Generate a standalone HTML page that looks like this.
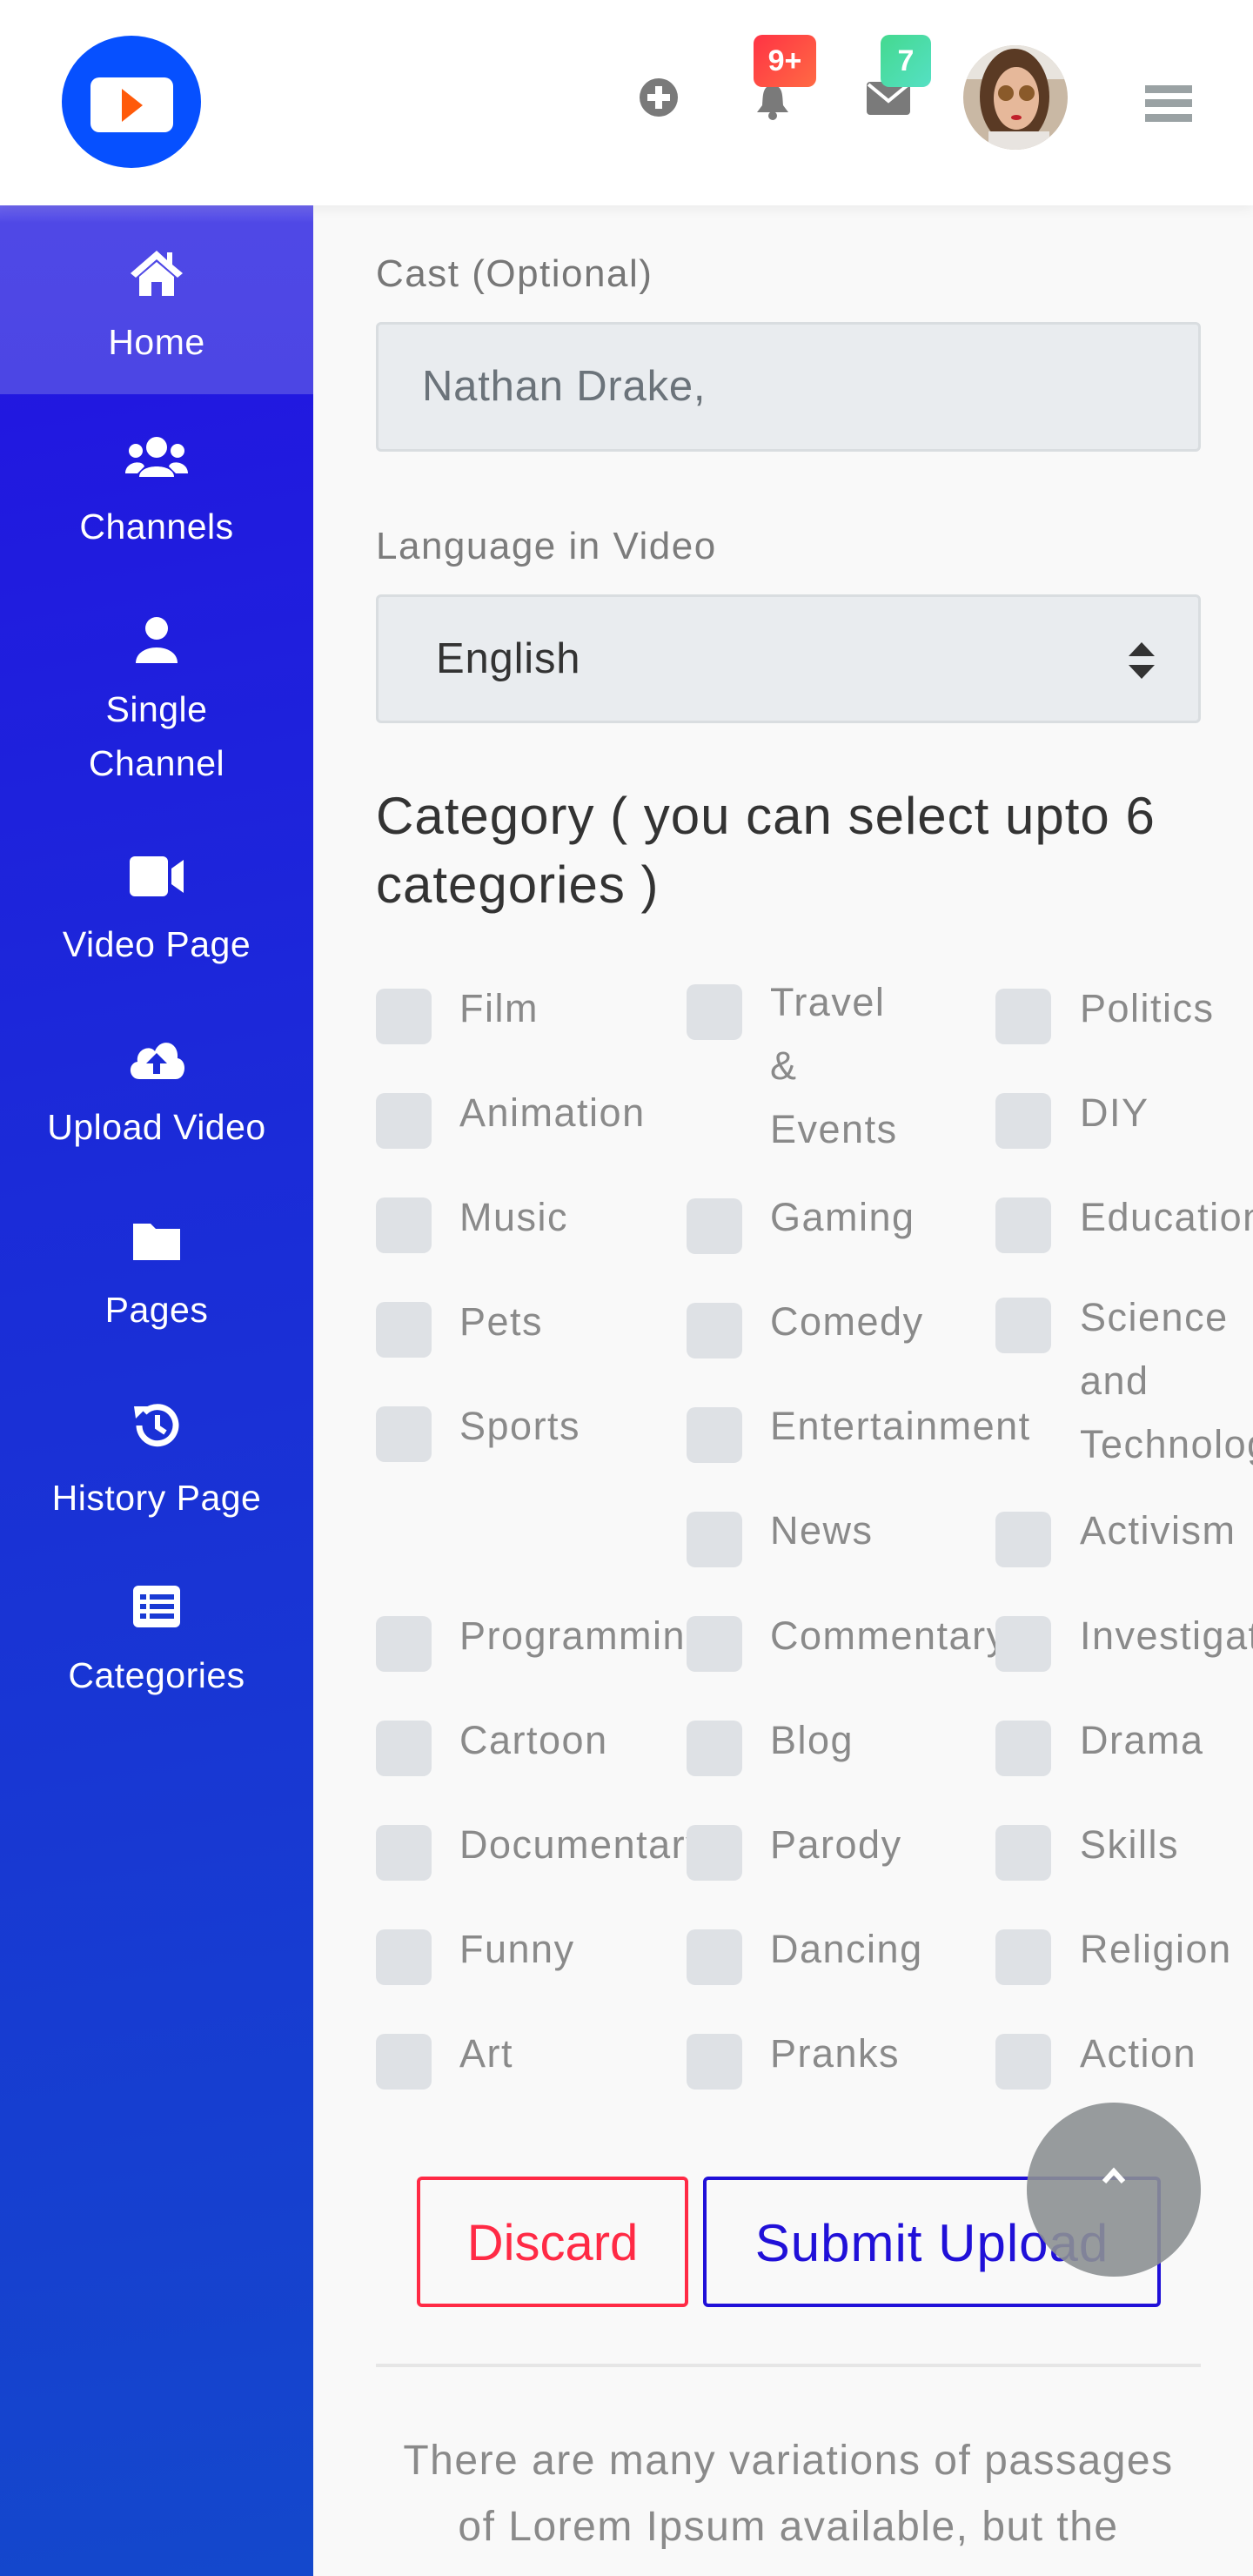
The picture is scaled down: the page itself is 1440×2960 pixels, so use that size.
<!DOCTYPE html>
<html><head><meta charset="utf-8"><style>
*{margin:0;padding:0;box-sizing:border-box}
html,body{width:1440px;height:2960px;overflow:hidden}
body{background:#f9f9f9;font-family:"Liberation Sans",sans-serif;position:relative}
#wrap{position:absolute;left:0;top:0;width:1440px;height:2960px;overflow:hidden}
.hdr{position:absolute;left:0;top:0;width:1440px;height:236px;background:#fff;box-shadow:0 4px 14px rgba(0,0,0,.06);z-index:5}
.side{position:absolute;left:0;top:236px;width:360px;height:2724px;background:linear-gradient(170deg,#2313e2 0%,#1b2bd8 40%,#1448cc 100%)}
.act{position:absolute;left:0;top:0;width:360px;height:217px;background:linear-gradient(180deg,#6e66ee 0,#4f48e6 20px,#4c46e4 100%)}
.si{position:absolute;left:0;width:360px;text-align:center;color:#fff;font-size:41px;line-height:62px;letter-spacing:0.5px}
.si svg{display:block;margin:0 auto 22px}
.abs{position:absolute}
.lbl{position:absolute;left:432px;color:#7c7c7c;font-size:44px;letter-spacing:1.5px}
.inp{position:absolute;left:432px;width:948px;background:#e9ecef;border:3px solid #d9dde0;border-radius:6px;color:#6b737a;font-size:49px;letter-spacing:0.8px}
.cb{position:absolute;width:64px;height:64px;background:#dee1e5;border-radius:10px}
.ct{position:absolute;color:#8a8a8a;font-size:45px;line-height:73px;white-space:nowrap;letter-spacing:1.5px}
.c3{max-width:199px;overflow:hidden}
</style></head><body><div id="wrap">
<div class="hdr">
  <svg class="abs" style="left:70px;top:40px" width="162" height="155"><ellipse cx="81" cy="77" rx="80" ry="76" fill="#0650ff"/><rect x="34" y="49" width="95" height="63" rx="10" fill="#fff"/><path d="M70 62 L94 81 L70 100Z" fill="#ff5a0a"/></svg>
  <svg class="abs" style="left:734px;top:89px" width="46" height="46"><circle cx="23" cy="23" r="22" fill="#7a7a7a"/><rect x="19" y="10" width="8" height="26" fill="#fff"/><rect x="10" y="19" width="26" height="8" fill="#fff"/></svg>
  <svg class="abs" style="left:866px;top:95px" width="44" height="44"><path d="M22 2 C10 4 11 14 10 26 L4 34 H40 L34 26 C33 14 34 4 22 2Z" fill="#7a7a7a"/><circle cx="22" cy="38" r="5" fill="#7a7a7a"/></svg>
  <div class="abs" style="left:866px;top:40px;width:72px;height:60px;border-radius:10px;background:linear-gradient(135deg,#ff3344,#ff6a44);color:#fff;font-size:34px;font-weight:bold;text-align:center;line-height:60px">9+</div>
  <svg class="abs" style="left:996px;top:94px" width="50" height="38"><rect width="50" height="38" rx="4" fill="#7a7a7a"/><path d="M2 3 L25 22 L48 3" stroke="#fff" stroke-width="4" fill="none"/></svg>
  <div class="abs" style="left:1012px;top:40px;width:58px;height:60px;border-radius:10px;background:linear-gradient(135deg,#44d98f,#55e0c4);color:#fff;font-size:34px;font-weight:bold;text-align:center;line-height:60px">7</div>
  <svg class="abs" style="left:1106px;top:51px" width="122" height="122"><defs><clipPath id="c"><circle cx="61" cy="61" r="60"/></clipPath></defs><g clip-path="url(#c)"><rect width="122" height="122" fill="#c9b8a4"/><rect x="0" y="0" width="122" height="40" fill="#e8e4de"/><ellipse cx="60" cy="60" rx="40" ry="55" fill="#5a3a24"/><ellipse cx="62" cy="62" rx="26" ry="36" fill="#e6b89a"/><circle cx="50" cy="56" r="9" fill="#8a5a2a"/><circle cx="74" cy="56" r="9" fill="#8a5a2a"/><ellipse cx="62" cy="84" rx="6" ry="3" fill="#c0202a"/><rect x="30" y="100" width="70" height="30" fill="#e8e4e0"/></g></svg>
  <div class="abs" style="left:1316px;top:98px;width:54px;height:9px;background:#9aa2a4"></div>
  <div class="abs" style="left:1316px;top:114px;width:54px;height:9px;background:#9aa2a4"></div>
  <div class="abs" style="left:1316px;top:131px;width:54px;height:9px;background:#9aa2a4"></div>
</div>
<div class="side">
  <div class="act"></div>
  <div class="si" style="top:50px"><svg width="64" height="54" viewBox="0 0 64 54"><path d="M32 2 L2 28 L8 33 L32 12 L56 33 L62 28 L50 18 V4 H44 V13Z" fill="#fff"/><path d="M12 32 L32 15 L52 32 V54 H38 V38 H26 V54 H12Z" fill="#fff"/></svg>Home</div>
  <div class="si" style="top:262px"><svg width="76" height="54" viewBox="0 0 76 54"><circle cx="38" cy="16" r="12" fill="#fff"/><circle cx="14" cy="20" r="8" fill="#fff"/><circle cx="62" cy="20" r="8" fill="#fff"/><path d="M18 50 C18 34 58 34 58 50Z" fill="#fff"/><path d="M2 46 C2 32 22 30 24 38 L16 46Z M74 46 C74 32 54 30 52 38 L60 46Z" fill="#fff"/></svg>Channels</div>
  <div class="si" style="top:472px"><svg width="56" height="54" viewBox="0 0 56 54"><circle cx="28" cy="14" r="13" fill="#fff"/><path d="M4 54 C4 30 52 30 52 54Z" fill="#fff"/></svg>Single<br>Channel</div>
  <div class="si" style="top:746px"><svg width="66" height="50" viewBox="0 0 66 50"><rect x="2" y="2" width="44" height="46" rx="6" fill="#fff"/><path d="M50 16 L64 6 V44 L50 34Z" fill="#fff"/></svg>Video Page</div>
  <div class="si" style="top:952px"><svg width="72" height="54" viewBox="0 0 72 54"><path d="M16 52 C4 52 2 34 14 32 C12 18 28 12 34 20 C40 4 62 8 60 28 C72 30 70 52 58 52Z" fill="#fff"/><path d="M36 22 L24 34 H32 V46 H40 V34 H48Z" fill="#1b2bd8"/></svg>Upload Video</div>
  <div class="si" style="top:1166px"><svg width="62" height="50" viewBox="0 0 62 50"><path d="M4 4 H24 L30 10 H58 V46 H4Z" fill="#fff"/></svg>Pages</div>
  <div class="si" style="top:1372px"><svg width="60" height="60" viewBox="0 0 60 60"><path d="M10 30 A21 21 0 1 0 16 15" stroke="#fff" stroke-width="7" fill="none"/><path d="M4 8 L20 8 L6 22Z" fill="#fff"/><path d="M31 18 V32 L40 38" stroke="#fff" stroke-width="6" fill="none"/></svg>History Page</div>
  <div class="si" style="top:1584px"><svg width="58" height="52" viewBox="0 0 58 52"><rect x="2" y="2" width="54" height="48" rx="6" fill="#fff"/><g fill="#1a3ad4"><rect x="10" y="12" width="7" height="6"/><rect x="21" y="12" width="28" height="6"/><rect x="10" y="23" width="7" height="6"/><rect x="21" y="23" width="28" height="6"/><rect x="10" y="34" width="7" height="6"/><rect x="21" y="34" width="28" height="6"/></g></svg>Categories</div>
</div>

<div class="lbl" style="top:290px;color:#777">Cast (Optional)</div>
<div class="inp" style="top:370px;height:149px;line-height:143px;padding-left:50px">Nathan Drake,</div>
<div class="lbl" style="top:603px">Language in Video</div>
<div class="inp" style="top:683px;height:148px;line-height:142px;padding-left:66px;color:#333">English
  <svg class="abs" style="left:860px;top:50px" width="34" height="46"><path d="M17 2 L32 18 H2Z M17 44 L32 28 H2Z" fill="#333"/></svg></div>
<div class="abs" style="left:432px;top:898px;font-size:60px;line-height:79px;color:#333;width:948px;letter-spacing:1px">Category ( you can select upto 6 categories )</div>

<div class="cb" style="left:432px;top:1136px"></div><div class="ct" style="left:528px;top:1122px">Film</div>
<div class="cb" style="left:789px;top:1131px"></div><div class="ct" style="left:885px;top:1115px">Travel<br>&amp;<br>Events</div>
<div class="cb" style="left:1144px;top:1136px"></div><div class="ct c3" style="left:1241px;top:1122px">Politics</div>

<div class="cb" style="left:432px;top:1256px"></div><div class="ct" style="left:528px;top:1242px">Animation</div>
<div class="cb" style="left:1144px;top:1256px"></div><div class="ct c3" style="left:1241px;top:1242px">DIY</div>

<div class="cb" style="left:432px;top:1376px"></div><div class="ct" style="left:528px;top:1362px">Music</div>
<div class="cb" style="left:789px;top:1377px"></div><div class="ct" style="left:885px;top:1362px">Gaming</div>
<div class="cb" style="left:1144px;top:1376px"></div><div class="ct c3" style="left:1241px;top:1362px">Education</div>

<div class="cb" style="left:432px;top:1496px"></div><div class="ct" style="left:528px;top:1482px">Pets</div>
<div class="cb" style="left:789px;top:1497px"></div><div class="ct" style="left:885px;top:1482px">Comedy</div>
<div class="cb" style="left:1144px;top:1491px"></div><div class="ct c3" style="left:1241px;top:1477px">Science<br>and<br>Technology</div>

<div class="cb" style="left:432px;top:1616px"></div><div class="ct" style="left:528px;top:1602px">Sports</div>
<div class="cb" style="left:789px;top:1617px"></div><div class="ct" style="left:885px;top:1602px">Entertainment</div>

<div class="cb" style="left:789px;top:1737px"></div><div class="ct" style="left:885px;top:1722px">News</div>
<div class="cb" style="left:1144px;top:1737px"></div><div class="ct c3" style="left:1241px;top:1722px">Activism</div>

<div class="ct" style="left:528px;top:1843px">Programming</div>
<div class="cb" style="left:432px;top:1857px"></div>
<div class="ct" style="left:885px;top:1843px">Commentary</div>
<div class="cb" style="left:789px;top:1857px"></div>
<div class="cb" style="left:1144px;top:1857px"></div><div class="ct c3" style="left:1241px;top:1843px">Investigation</div>

<div class="cb" style="left:432px;top:1977px"></div><div class="ct" style="left:528px;top:1963px">Cartoon</div>
<div class="cb" style="left:789px;top:1977px"></div><div class="ct" style="left:885px;top:1963px">Blog</div>
<div class="cb" style="left:1144px;top:1977px"></div><div class="ct c3" style="left:1241px;top:1963px">Drama</div>

<div class="ct" style="left:528px;top:2083px">Documentary</div>
<div class="cb" style="left:432px;top:2097px"></div>
<div class="cb" style="left:789px;top:2097px"></div><div class="ct" style="left:885px;top:2083px">Parody</div>
<div class="cb" style="left:1144px;top:2097px"></div><div class="ct c3" style="left:1241px;top:2083px">Skills</div>

<div class="cb" style="left:432px;top:2217px"></div><div class="ct" style="left:528px;top:2203px">Funny</div>
<div class="cb" style="left:789px;top:2217px"></div><div class="ct" style="left:885px;top:2203px">Dancing</div>
<div class="cb" style="left:1144px;top:2217px"></div><div class="ct c3" style="left:1241px;top:2203px">Religion</div>

<div class="cb" style="left:432px;top:2337px"></div><div class="ct" style="left:528px;top:2323px">Art</div>
<div class="cb" style="left:789px;top:2337px"></div><div class="ct" style="left:885px;top:2323px">Pranks</div>
<div class="cb" style="left:1144px;top:2337px"></div><div class="ct c3" style="left:1241px;top:2323px">Action</div>

<div class="abs" style="left:479px;top:2501px;width:312px;height:150px;border:4px solid #ff2a45;border-radius:6px;color:#ff2a45;font-size:58px;text-align:center;line-height:146px">Discard</div>
<div class="abs" style="left:808px;top:2501px;width:526px;height:150px;border:4px solid #2010d8;border-radius:6px;color:#2010d8;font-size:60px;letter-spacing:1px;text-align:center;line-height:146px">Submit Upload</div>
<div class="abs" style="left:1180px;top:2416px;width:200px;height:200px;border-radius:50%;background:rgba(140,144,146,.9)"><svg class="abs" style="left:86px;top:74px" width="28" height="20"><path d="M3 17 L14 5 L25 17" stroke="#fff" stroke-width="6" fill="none"/></svg></div>
<div class="abs" style="left:432px;top:2716px;width:948px;height:4px;background:#e6e6e6"></div>
<div class="abs" style="left:432px;top:2790px;width:948px;text-align:center;color:#8a8a8a;font-size:48px;letter-spacing:1.5px;line-height:76px">There are many variations of passages<br>of Lorem Ipsum available, but the</div>
</div></body></html>
